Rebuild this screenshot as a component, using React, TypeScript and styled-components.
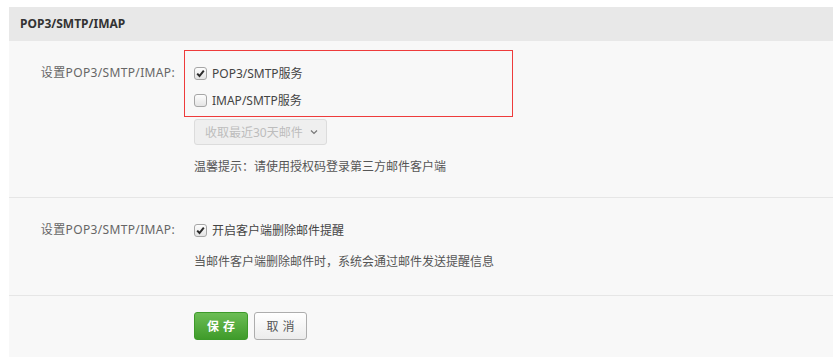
import styled, { createGlobalStyle } from "styled-components";
import { useState } from "react";

const GlobalStyle = createGlobalStyle`
  html, body {
    margin: 0;
    padding: 0;
    background: #fff;
  }
  body {
    font-family: "Noto Sans", "Noto Sans CJK SC", sans-serif;
    font-size: 12px;
    color: #555;
  }
`;

const Panel = styled.div`
  margin: 7px 0 0 9px;
  background: #f8f8f8;
  min-height: 350px;
`;

const PanelHeader = styled.div`
  height: 34px;
  line-height: 34px;
  padding-left: 11px;
  background: #e8e8e8;
  font-weight: bold;
  font-size: 12px;
  color: #333;
`;

const Section = styled.div<{ $top: number; $bottom: number; $last?: boolean }>`
  display: flex;
  padding: ${(p) => p.$top}px 0 ${(p) => p.$bottom}px;
  border-bottom: ${(p) => (p.$last ? "none" : "1px solid #e6e6e6")};
`;

const Label = styled.div<{ $offset: number }>`
  width: 166px;
  margin-top: ${(p) => p.$offset}px;
  margin-right: 9px;
  text-align: right;
  line-height: 20px;
  letter-spacing: 0.35px;
  color: #666;
`;

const Content = styled.div<{ $indent?: boolean }>`
  display: flex;
  flex-direction: column;
  padding-left: ${(p) => (p.$indent ? 10 : 0)}px;
`;

const Highlight = styled.div`
  width: 318px;
  border: 1px solid #ee3b3b;
  padding: 12px 0 6px 9px;
  display: flex;
  flex-direction: column;
  gap: 7px;
`;

const CheckRow = styled.label`
  display: flex;
  align-items: center;
  gap: 5px;
  height: 20px;
  color: #444;
  cursor: pointer;
`;

const Box = styled.span<{ $on: boolean }>`
  width: 11px;
  height: 11px;
  border: 1px solid #a6a6a6;
  border-radius: 3px;
  background: linear-gradient(#fdfdfd, #e4e4e4);
  display: flex;
  align-items: center;
  justify-content: center;
  box-sizing: content-box;
  svg {
    display: ${(p) => (p.$on ? "block" : "none")};
  }
`;

const Indented = styled.div`
  display: flex;
  flex-direction: column;
  padding-left: 10px;
`;

const Select = styled.div`
  margin-top: 2px;
  width: 133px;
  height: 26px;
  box-sizing: border-box;
  border: 1px solid #dcdcdc;
  border-radius: 3px;
  background: #efefef;
  color: #bdbdbd;
  display: flex;
  align-items: center;
  padding-left: 10px;
  gap: 7px;
`;

const Hint = styled.div<{ $gap: number }>`
  margin-top: ${(p) => p.$gap}px;
  line-height: 20px;
  color: #555;
`;

const Actions = styled.div`
  display: flex;
  gap: 6px;
`;

const Button = styled.button<{ $primary?: boolean }>`
  height: 28px;
  width: ${(p) => (p.$primary ? 54 : 53)}px;
  padding: 0;
  border-radius: 3px;
  font-family: inherit;
  font-size: 12px;
  letter-spacing: 4px;
  text-indent: 4px;
  cursor: pointer;
  border: 1px solid ${(p) => (p.$primary ? "#3d9a2a" : "#adadad")};
  background: ${(p) =>
    p.$primary
      ? "linear-gradient(#6cbd55, #3f9b2a)"
      : "linear-gradient(#ffffff, #ececec)"};
  color: ${(p) => (p.$primary ? "#fff" : "#555")};
  font-weight: ${(p) => (p.$primary ? "bold" : "normal")};
`;

const Tick = () => (
  <svg width="9" height="9" viewBox="0 0 9 9">
    <path d="M1.2 4.6 L3.5 7 L7.8 1.6" fill="none" stroke="#2b2b2b" strokeWidth="2" />
  </svg>
);

const Chevron = () => (
  <svg width="8" height="6" viewBox="0 0 8 6">
    <path d="M1 1.5 L4 4.5 L7 1.5" fill="none" stroke="#777" strokeWidth="1.2" />
  </svg>
);

const Check = ({ on, text, toggle }: { on: boolean; text: string; toggle: () => void }) => (
  <CheckRow onClick={toggle}>
    <Box $on={on}>
      <Tick />
    </Box>
    {text}
  </CheckRow>
);

const App = () => {
  const [pop, setPop] = useState(true);
  const [imap, setImap] = useState(false);
  const [notify, setNotify] = useState(true);

  return (
    <>
      <GlobalStyle />
      <Panel>
        <PanelHeader>POP3/SMTP/IMAP</PanelHeader>

        <Section $top={9} $bottom={20}>
          <Label $offset={13}>设置POP3/SMTP/IMAP:</Label>
          <Content>
            <Highlight>
              <Check on={pop} text="POP3/SMTP服务" toggle={() => setPop(!pop)} />
              <Check on={imap} text="IMAP/SMTP服务" toggle={() => setImap(!imap)} />
            </Highlight>
            <Indented>
              <Select>
                收取最近30天邮件
                <Chevron />
              </Select>
              <Hint $gap={12}>温馨提示：请使用授权码登录第三方邮件客户端</Hint>
            </Indented>
          </Content>
        </Section>

        <Section $top={22} $bottom={23}>
          <Label $offset={0}>设置POP3/SMTP/IMAP:</Label>
          <Content $indent>
            <Check on={notify} text="开启客户端删除邮件提醒" toggle={() => setNotify(!notify)} />
            <Hint $gap={12}>当邮件客户端删除邮件时，系统会通过邮件发送提醒信息</Hint>
          </Content>
        </Section>

        <Section $top={16} $bottom={20} $last>
          <Label $offset={0} />
          <Content $indent>
            <Actions>
              <Button $primary>保存</Button>
              <Button>取消</Button>
            </Actions>
          </Content>
        </Section>
      </Panel>
    </>
  );
};

export default App;
